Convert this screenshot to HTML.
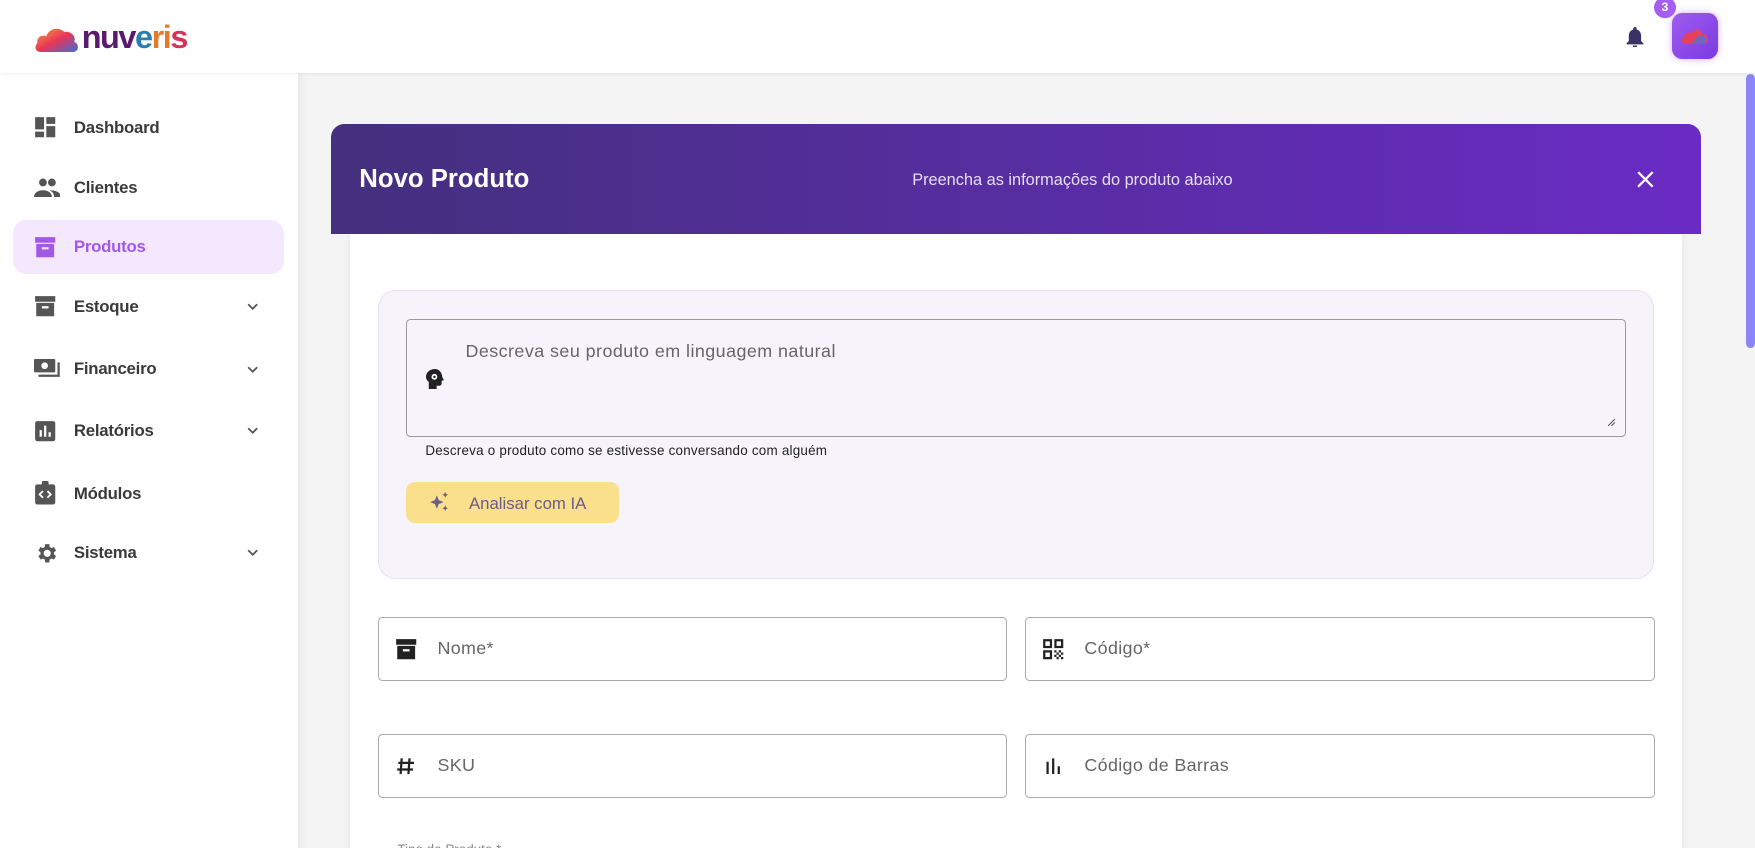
<!DOCTYPE html>
<html><head><meta charset="utf-8"><style>
*{box-sizing:border-box;margin:0;padding:0}
html,body{width:1755px;height:848px;overflow:hidden;background:#f4f4f5}
#w{zoom:1.11926;width:1568px;height:758px;overflow:hidden;background:#f4f4f5;font-family:"Liberation Sans",sans-serif;position:relative}
.top{position:absolute;left:0;top:0;width:1568px;height:65px;background:#fff;box-shadow:0 1px 4px rgba(0,0,0,.08);z-index:3}
.side{position:absolute;left:0;top:65px;width:266px;height:700px;background:#fff;box-shadow:2px 0 8px rgba(0,0,0,.06);z-index:2}
.item{position:absolute;left:12px;width:242px;height:48px;border-radius:12px;display:flex;align-items:center;color:#3a3a3a;font-size:15px}
.item svg{position:absolute;left:18px}
.item span{position:absolute;left:54px;font-weight:bold;letter-spacing:-.2px}
.item .chev{position:absolute;left:208px}
.act{background:#f3e8fd;color:#a259e6}
.hdr{position:absolute;left:296px;top:111px;width:1224px;height:98px;border-radius:12px 12px 0 0;background:linear-gradient(90deg,#44307e,#6a2bc4)}
.card{position:absolute;left:313px;top:209px;width:1190px;height:560px;background:#fff;box-shadow:0 0 8px rgba(0,0,0,.06)}
.field{position:absolute;height:57px;border:1px solid #aaa;border-radius:4px;background:#fff}
.field svg{position:absolute;left:14px;top:18px}
.field span{position:absolute;left:52px;top:18px;font-size:16px;color:#666;letter-spacing:.3px}
</style></head><body><div id="w">
<div class="top">
 <svg style="position:absolute;left:30px;top:21px" width="42" height="26" viewBox="0 0 42 26"><defs><linearGradient id="g" x1="0" y1="0" x2="1" y2="1"><stop offset="0" stop-color="#f6a23a"/><stop offset=".5" stop-color="#e8355a"/><stop offset="1" stop-color="#3b6fd4"/></linearGradient></defs><path d="M6 25C1 25 0 20 3 17 2 12 7 9 11 11 13 4 22 2 27 7 33 6 38 11 36 16 41 18 40 25 35 25Z" fill="url(#g)"/></svg>
 <div style="position:absolute;left:73px;top:15px;font-size:29px;font-weight:bold;letter-spacing:-1.3px;line-height:36px"><span style="color:#5a1a6e">nuv</span><span style="color:#2b7fb0">e</span><span style="color:#e57a2a">ri</span><span style="color:#d6335a">s</span></div>
 <svg style="position:absolute;left:1453px;top:24px" width="16" height="18" viewBox="0 0 16 18"><path d="M8 0a1.5 1.5 0 0 1 1.5 1.5v.7C12 2.9 13.5 5 13.5 8v4.5L15.5 14.5v1H.5v-1L2.5 12.5V8C2.5 5 4 2.9 6.5 2.2v-.7A1.5 1.5 0 0 1 8 0zM6 16.5h4a2 2 0 0 1-4 0z" fill="#3a3166"/></svg>
 <div style="position:absolute;left:1494px;top:12px;width:41px;height:41px;border-radius:9px;background:linear-gradient(135deg,#a05cf0,#7a3ae0);box-shadow:0 0 6px rgba(160,90,240,.5)"><svg style="position:absolute;left:8px;top:12px" width="26" height="16" viewBox="0 0 26 16"><path d="M4 15C0 15 0 10 3 9 3 5 7 4 9 6 11 1 18 1 19 6 24 6 26 12 22 15Z" fill="#e8405a"/><path d="M10 15 14 9 19 7 23 10 22 15Z" fill="#4a72d8" opacity=".8"/></svg></div>
 <div style="position:absolute;left:1478px;top:-3px;width:19px;height:19px;border-radius:50%;background:#a45ef0;color:#fff;font-size:11px;font-weight:bold;text-align:center;line-height:19px">3</div>
</div>
<div style="position:absolute;left:1560px;top:66px;width:8px;height:245px;background:#8b85f7;border-radius:4px;z-index:4"></div>
<div class="side">
 <div class="item" style="top:25px"><svg width="20" height="20" viewBox="0 0 20 20"><path d="M1 1h8v11H1zM11 1h8v6h-8zM11 9h8v10h-8zM1 14h8v5H1z" fill="#555"/></svg><span>Dashboard</span></div>
 <div class="item" style="top:79px"><svg width="24" height="18" viewBox="0 0 24 18"><circle cx="8" cy="4" r="3.5" fill="#555"/><circle cx="16" cy="4" r="3.5" fill="#555"/><path d="M0 17c0-4 4-6 8-6s8 2 8 6zM14 11c4 0 10 1 10 6h-6c0-3-2-5-4-6z" fill="#555"/></svg><span>Clientes</span></div>
 <div class="item act" style="top:132px"><svg width="20" height="20" viewBox="0 0 20 20"><path d="M1 1h18v5H1zM2 7h16v12H2z" fill="#a259e6"/><rect x="7" y="10" width="6" height="2" fill="#f3e8fd"/></svg><span>Produtos</span></div>
 <div class="item" style="top:185px"><svg width="20" height="20" viewBox="0 0 20 20"><path d="M1 1h18v5H1zM2 7h16v12H2z" fill="#555"/><rect x="7" y="10" width="6" height="2" fill="#fff"/></svg><span>Estoque</span><svg class="chev" width="12" height="8" viewBox="0 0 12 8"><path d="M2 2l4 4 4-4" stroke="#555" stroke-width="1.6" fill="none"/></svg></div>
 <div class="item" style="top:241px"><svg width="24" height="18" viewBox="0 0 24 18"><rect x="0" y="0" width="19" height="12" rx="1" fill="#555"/><circle cx="9.5" cy="6" r="3" fill="#fff"/><path d="M21 3v11H4v2h19V3z" fill="#555"/></svg><span>Financeiro</span><svg class="chev" width="12" height="8" viewBox="0 0 12 8"><path d="M2 2l4 4 4-4" stroke="#555" stroke-width="1.6" fill="none"/></svg></div>
 <div class="item" style="top:296px"><svg width="20" height="20" viewBox="0 0 20 20"><rect x="1" y="1" width="18" height="18" rx="2" fill="#555"/><path d="M5 9h2v6H5zM9 5h2v10H9zM13 11h2v4h-2z" fill="#fff"/></svg><span>Relatórios</span><svg class="chev" width="12" height="8" viewBox="0 0 12 8"><path d="M2 2l4 4 4-4" stroke="#555" stroke-width="1.6" fill="none"/></svg></div>
 <div class="item" style="top:352px"><svg width="20" height="22" viewBox="0 0 20 22"><rect x="1" y="3" width="18" height="18" rx="2" fill="#555"/><rect x="7" y="0" width="6" height="5" rx="1" fill="#555"/><path d="M8 9l-3 3 3 3M12 9l3 3-3 3" stroke="#fff" stroke-width="1.6" fill="none"/></svg><span>Módulos</span></div>
 <div class="item" style="top:405px"><svg width="22" height="22" viewBox="0 0 24 24"><path d="M19.4 13a7.5 7.5 0 0 0 0-2l2.1-1.6-2-3.5-2.5 1a7.5 7.5 0 0 0-1.7-1L14.9 3h-4l-.4 2.9a7.5 7.5 0 0 0-1.7 1l-2.5-1-2 3.5L6.4 11a7.5 7.5 0 0 0 0 2l-2.1 1.6 2 3.5 2.5-1a7.5 7.5 0 0 0 1.7 1l.4 2.9h4l.4-2.9a7.5 7.5 0 0 0 1.7-1l2.5 1 2-3.5zM12.9 15.5a3.5 3.5 0 1 1 0-7 3.5 3.5 0 0 1 0 7z" fill="#555"/></svg><span>Sistema</span><svg class="chev" width="12" height="8" viewBox="0 0 12 8"><path d="M2 2l4 4 4-4" stroke="#555" stroke-width="1.6" fill="none"/></svg></div>
</div>
<div class="card"></div>
<div class="hdr">
 <div style="position:absolute;left:25px;top:36px;color:#fff;font-size:23px;font-weight:bold">Novo Produto</div>
 <div style="position:absolute;left:519px;top:42px;color:#e6def5;font-size:14.6px">Preencha as informações do produto abaixo</div>
 <svg style="position:absolute;left:1167px;top:42px" width="15" height="15" viewBox="0 0 15 15"><path d="M1 1l13 13M14 1L1 14" stroke="#fff" stroke-width="2"/></svg>
</div>
<div style="position:absolute;left:338px;top:259px;width:1140px;height:258px;background:#f6f4fa;border:1px solid #e6e2ee;border-radius:16px"></div>
<div style="position:absolute;left:363px;top:285px;width:1090px;height:105px;border:1px solid #999;border-radius:4px">
 <svg style="position:absolute;left:17px;top:44px" width="16" height="18" viewBox="0 0 16 18"><path d="M8 0C3.5 0 0 3 0 7c0 2 1 3.5 2.5 4.5V18h7v-3h2.5c1 0 2-1 2-2v-2.5L16 10l-1.5-3C14.3 3 11.5 0 8 0z" fill="#222"/><circle cx="7.5" cy="7" r="2.6" fill="#fff"/><circle cx="7.5" cy="7" r="1.1" fill="#222"/></svg>
 <div style="position:absolute;left:52px;top:19px;font-size:16px;color:#666;letter-spacing:.4px">Descreva seu produto em linguagem natural</div>
 <svg style="position:absolute;right:8px;bottom:8px" width="8" height="8" viewBox="0 0 8 8"><path d="M7 1L1 7M7 4L4 7" stroke="#555" stroke-width="1"/></svg>
</div>
<div style="position:absolute;left:380px;top:396px;font-size:12px;color:#222;letter-spacing:.2px">Descreva o produto como se estivesse conversando com alguém</div>
<div style="position:absolute;left:363px;top:431px;width:190px;height:36px;background:#fae08c;border-radius:8px">
 <svg style="position:absolute;left:20px;top:9px" width="19" height="18" viewBox="0 0 19 18"><path d="M7 3l1.7 4.3L13 9l-4.3 1.7L7 15l-1.7-4.3L1 9l4.3-1.7z" fill="#6b5c8a"/><path d="M14.5 0l.8 1.7 1.7.8-1.7.8-.8 1.7-.8-1.7-1.7-.8 1.7-.8zM14.5 12l.8 1.7 1.7.8-1.7.8-.8 1.7-.8-1.7-1.7-.8 1.7-.8z" fill="#6b5c8a"/></svg>
 <div style="position:absolute;left:56px;top:10px;font-size:15px;color:#6b5c8a">Analisar com IA</div>
</div>
<div class="field" style="left:338px;top:551px;width:562px"><svg width="20" height="20" viewBox="0 0 20 20"><path d="M1 1h18v5H1zM2 7h16v12H2z" fill="#222"/><rect x="7" y="10" width="6" height="2" fill="#fff"/></svg><span>Nome*</span></div>
<div class="field" style="left:916px;top:551px;width:563px"><svg width="20" height="20" viewBox="0 0 20 20"><path d="M1 1h8v8H1zM3 3v4h4V3zM11 1h8v8h-8zM13 3v4h4V3zM1 11h8v8H1zM3 13v4h4v-4z" fill="#222"/><path d="M11 11h2v2h-2zM15 11h2v2h-2zM13 13h2v2h-2zM11 15h2v2h-2zM15 15h2v2h-2zM13 17h2v2h-2zM17 17h2v2h-2zM17 13h2v2h-2z" fill="#222"/></svg><span>Código*</span></div>
<div class="field" style="left:338px;top:656px;width:562px"><svg width="20" height="20" viewBox="0 0 20 20"><path d="M6 3l-1 14M13 3l-1 14M3 7h14M2 13h14" stroke="#222" stroke-width="2"/></svg><span>SKU</span></div>
<div class="field" style="left:916px;top:656px;width:563px"><svg width="20" height="20" viewBox="0 0 20 20"><path d="M4 6h2v11H4zM9 3h2v14H9zM14 10h2v7h-2z" fill="#222"/></svg><span>Código de Barras</span></div>
<div style="position:absolute;left:355px;top:752px;font-size:12px;color:#888">Tipo de Produto *</div>
</div></body></html>
